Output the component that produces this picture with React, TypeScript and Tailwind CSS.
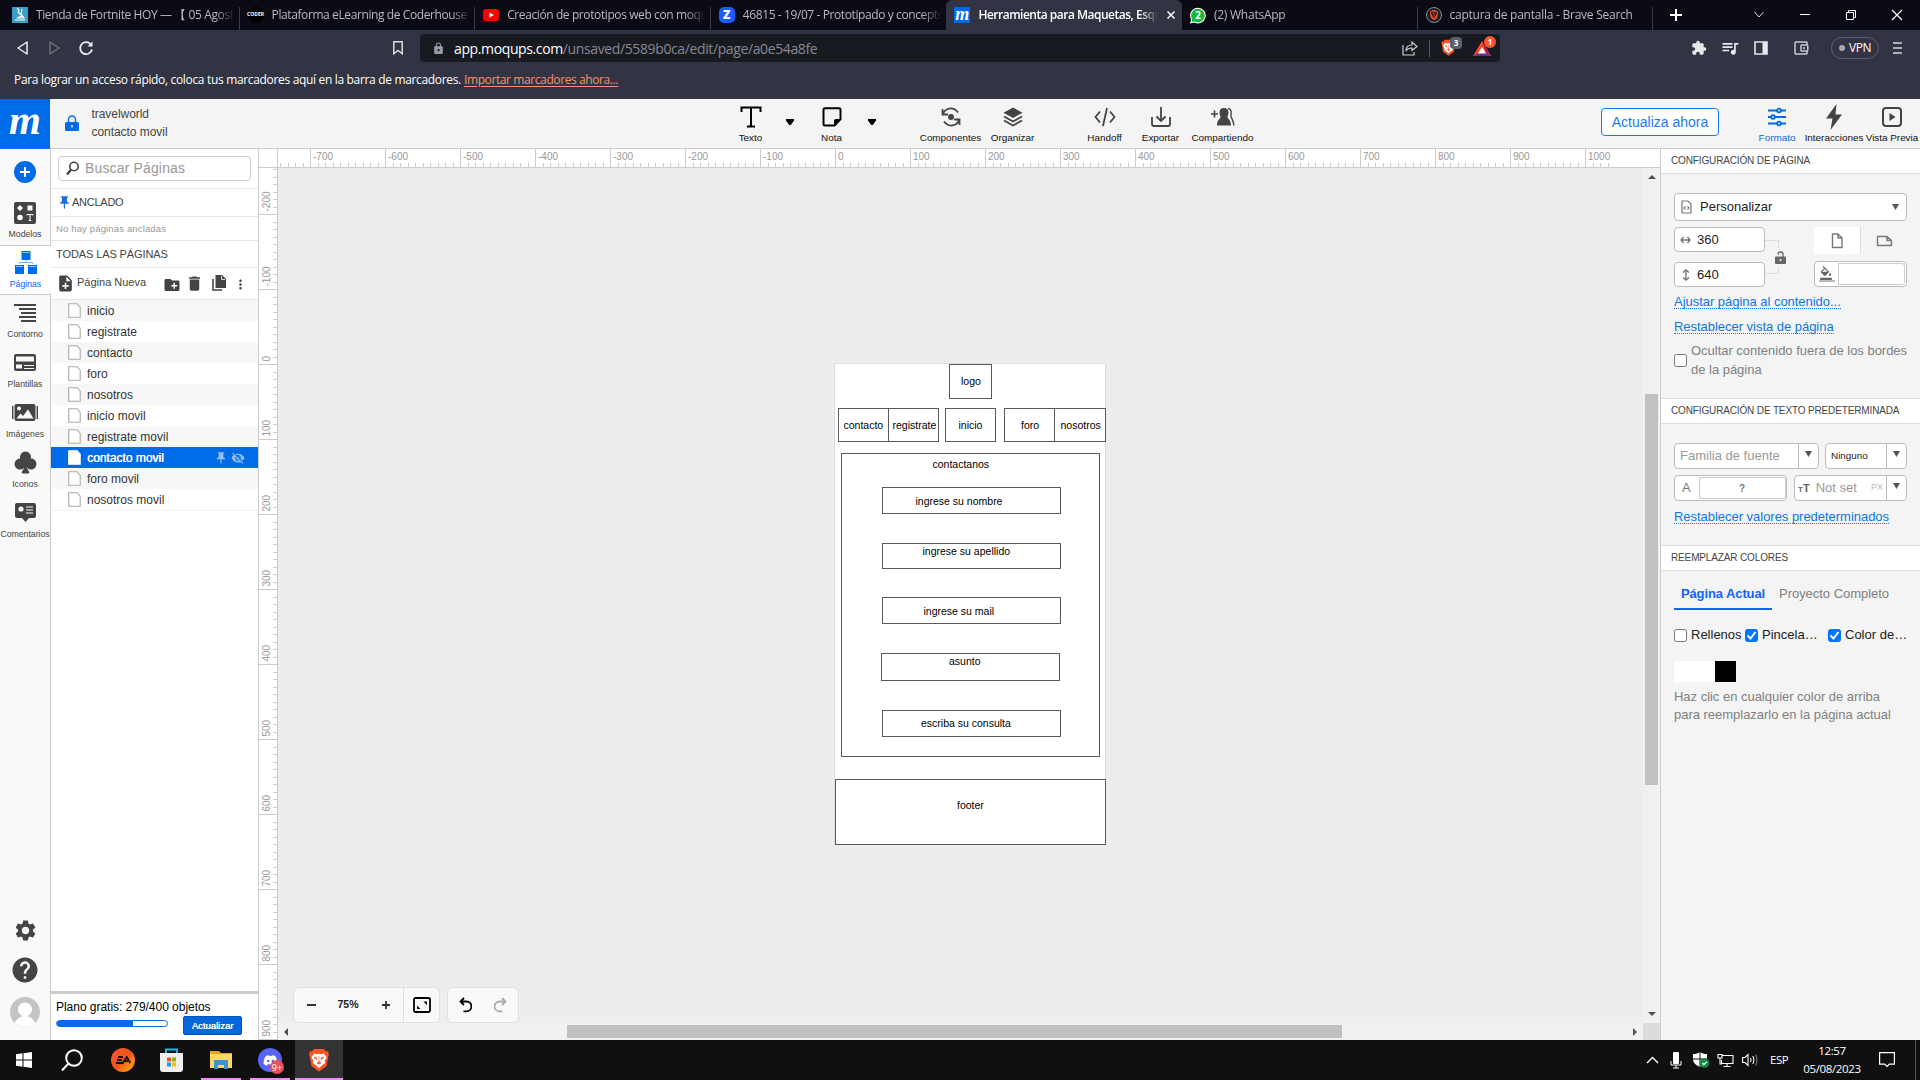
import React from "react";
import {
  MdExtension, MdQueueMusic, MdSettings, MdHelp, MdCreateNewFolder, MdDelete, MdMoreVert,
  MdNoteAdd, MdVisibilityOff, MdPushPin, MdLock, MdFormatColorFill, MdOutlineAccountBalanceWallet,
} from "react-icons/md";
import { FaDiscord } from "react-icons/fa";
import { SiBrave } from "react-icons/si";
import { BsSuitClubFill } from "react-icons/bs";

type Kids = { children?: React.ReactNode };

/* ---------- Browser chrome ---------- */

function Tab({ icon, title, active, line = true, last }: { icon: React.ReactNode; title: string; active?: boolean; line?: boolean; last?: boolean }) {
  return (
    <div className={`relative flex h-[30px] w-[235.600px] shrink-0 items-center pl-[8px] ${active ? "rounded-t-md bg-[#323443] font-semibold text-white" : "text-[#b9bac0]"}`}>
      <div className="flex h-4 w-4 shrink-0 items-center justify-center">{icon}</div>
      <div className={`ml-[8px] overflow-hidden whitespace-nowrap ${active ? "w-[180px] tracking-[-0.5px]" : last ? "w-[200px] tracking-[-0.25px]" : "w-[199px] tracking-[-0.4px]"} [mask-image:linear-gradient(to_right,black_90%,transparent)]`}>{title}</div>
      {active && (
        <svg className="ml-[8px]" width="10" height="10" viewBox="0 0 10 10" stroke="#fff" strokeWidth="1.5"><path d="M1.500 1.500l7 7M8.500 1.500l-7 7" /></svg>
      )}
      {line && !active && <div className="absolute right-0 top-[7px] h-[23px] w-px bg-[#3a3b45]" />}
    </div>
  );
}

function BraveIcon({ size }: { size: number }) {
  return (
    <svg width={size} height={size} viewBox="0 0 24 24">
      <path d="M7 1h10l2 2.4 2-.2 1 3.3-.8 2.5L19.6 18 12 23.6 4.400 18 2.800 9 2 6.500l1-3.300 2 .2z" fill="#fb5424" />
      <path d="M7 5.500l3 .8 2-.5 2 .5 3-.8 2.600 4-2 3.500.6 2-3 2.200L12 20l-3.200-2.800-3-2.200.6-2-2-3.500z" fill="#fff" />
      <path d="M7 9l3 .8-.5 2zM17 9l-3 .8.5 2zM12 8v5.500l-2 1.500 2 1.300 2-1.300-2-1.500" fill="#fb5424" stroke="#fb5424" strokeWidth=".6" />
    </svg>
  );
}

function TabStrip() {
  return (
    <div className="flex h-[30px] bg-[#0a0b14] pl-[4px] text-[12px]">
      <Tab title="Tienda de Fortnite HOY — 【 05 Agosto" icon={
        <svg width="16" height="16" viewBox="0 0 16 16"><rect width="16" height="16" fill="#3a9ec6" /><path d="M5 1l2 2-1 2 4 4-5 2h7l-3-4 1-5M3 13h10" fill="none" stroke="#fff" strokeWidth="1.2" /></svg>} />
      <Tab title="Plataforma eLearning de Coderhouse" icon={
        <div className="flex h-4 w-4 items-center justify-center rounded-full bg-black text-[5px] font-bold text-white">CODER</div>} />
      <Tab title="Creación de prototipos web con moqups" icon={
        <svg width="16" height="16" viewBox="0 0 16 16"><rect y="2" width="16" height="12" rx="3" fill="#f00" /><path d="M6.500 5.500v5L11 8z" fill="#fff" /></svg>} />
      <Tab line={false} title="46815 - 19/07 - Prototipado y conceptos" icon={
        <div className="flex h-4 w-4 items-center justify-center rounded-[5px] bg-[#1a5cff] text-[12px] font-extrabold text-white">Z</div>} />
      <Tab active title="Herramienta para Maquetas, Esquemas" icon={
        <div className="flex h-4 w-4 items-center justify-center bg-[#006be6] pb-[3px] font-['Liberation_Serif',serif] text-[18px] font-bold italic leading-none text-white">m</div>} />
      <Tab title="(2) WhatsApp" last icon={
        <svg width="17" height="17" viewBox="0 0 17 17"><path d="M8.500.7a7.800 7.800 0 1 1-3.800 14.700L.8 16.300l1-3.800A7.800 7.800 0 0 1 8.500.7z" fill="#12b93c" stroke="#fff" strokeWidth="1.100" /><text x="8.600" y="12.200" textAnchor="middle" fontSize="10.500" fontWeight="700" fill="#fff">2</text></svg>} />
      <Tab title="captura de pantalla - Brave Search" last icon={
        <div className="flex h-4 w-4 items-center justify-center rounded-full border border-[#8d8e96] bg-[#1b1c25]"><SiBrave size={10} color="#fb5424" /></div>} />
      <div className="flex w-[30px] items-center justify-end">
        <svg className="shrink-0" width="14" height="14" viewBox="0 0 14 14" stroke="#fff" strokeWidth="2"><path d="M7 1v12M1 7h12" /></svg>
      </div>
      <div className="ml-auto flex items-center gap-[34px] pr-[17px]">
        <svg width="12" height="12" viewBox="0 0 12 12" fill="none" stroke="#ddd"><path d="M1.500 3l4.500 5 4.500-5" /></svg>
        <svg width="12" height="12" viewBox="0 0 12 12" stroke="#fff"><path d="M1 5.500h10" /></svg>
        <svg width="12" height="12" viewBox="0 0 12 12" fill="none" stroke="#fff"><path d="M1.500 3.500h7v7h-7zM3.500 3.500v-2h7v7h-2" /></svg>
        <svg width="12" height="12" viewBox="0 0 12 12" stroke="#fff" strokeWidth="1.200"><path d="M1 1l10 10M11 1L1 11" /></svg>
      </div>
    </div>
  );
}

function AddressRow() {
  return (
    <div className="flex h-[36px] items-center">
      <svg className="ml-[16px]" width="13" height="16" viewBox="0 0 13 16" fill="none" stroke="#eee" strokeWidth="1.500"><path d="M11 2v12L2 8z" strokeLinejoin="round" /></svg>
      <svg className="ml-[19px]" width="13" height="16" viewBox="0 0 13 16" fill="none" stroke="#6d6f7c" strokeWidth="1.500"><path d="M2 2v12l9-6z" strokeLinejoin="round" /></svg>
      <svg className="ml-[17px]" width="16" height="16" viewBox="0 0 16 16" fill="none" stroke="#eee" strokeWidth="1.800"><path d="M14 9.500A6 6 0 1 1 12.500 4" /><path d="M14.500 1.500v5h-5z" fill="#eee" stroke="none" /></svg>
      <svg className="ml-[298px]" width="12" height="16" viewBox="0 0 12 16" fill="none" stroke="#ddd" strokeWidth="1.500"><path d="M1.800 1.800h8.400v12L6 10.500l-4.200 3.300z" /></svg>
      <div className="ml-[16px] flex h-[28px] w-[1080px] items-center rounded-[4px] bg-[#181a21] text-[14px]">
        <MdLock className="ml-[12px] text-[#9b9ca5]" size={13} />
        <div className="ml-[9px] grow whitespace-nowrap tracking-[-0.38px] text-[#868891]"><span className="text-white">app.moqups.com</span>/unsaved/5589b0ca/edit/page/a0e54a8fe</div>
        <svg width="16" height="16" viewBox="0 0 16 16" fill="none" stroke="#ccc" strokeWidth="1.200"><path d="M1 5v10h11v-3M4 11c0-4 2-6 6-6V2l5 4.500-5 4V8C7 8 5 9 4 11z" /></svg>
        <div className="ml-[11px] mr-[10px] h-[17px] w-px bg-[#555762]" />
        <div className="relative h-[18px] w-[24px]">
          <BraveIcon size={17} />
          <div className="absolute -top-[2px] left-[10px] flex h-[12px] w-[12px] items-center justify-center rounded-[4px] bg-[#5d5f6d] text-[8px] font-bold text-white">3</div>
        </div>
        <div className="relative ml-[9px] mr-[4px] h-[18px] w-[23px]">
          <svg width="18" height="18" viewBox="0 0 18 18"><path d="M9 2L0 17h18z" fill="#ff4724" /><path d="M0 17h18l-9-5z" fill="#662d91" /><path d="M9 2l9 15-5-3z" fill="#9e1f63" /><path d="M9 8l4 6.500H5z" fill="#fff" /></svg>
          <div className="absolute -top-[3px] left-[11px] flex h-[12px] w-[12px] items-center justify-center rounded-full bg-[#fb542b] text-[8px] font-bold text-white">1</div>
        </div>
      </div>
      <div className="ml-auto flex items-center pr-[17px] text-[#e8e8ea]">
        <MdExtension size={16} />
        <MdQueueMusic size={20} className="ml-[13px]" />
        <svg className="ml-[14px]" width="14" height="14" viewBox="0 0 14 14"><path d="M1 1h12v12H1z" fill="none" stroke="#e8e8ea" strokeWidth="1.600" /><path d="M8.500 1H13v12H8.500z" fill="#e8e8ea" /></svg>
        <MdOutlineAccountBalanceWallet size={18} className="ml-[24px] text-[#c8c9ce]" />
        <div className="ml-[21px] flex h-[22px] w-[48px] items-center justify-center rounded-full border border-[#5d5f6d] text-[12px] tracking-[-0.4px] text-white"><span className="mr-[4px] h-[6px] w-[6px] rounded-full bg-[#a8a9b2]" />VPN</div>
        <svg className="ml-[13px]" width="11" height="12" viewBox="0 0 11 12" stroke="#d8d8dc" strokeWidth="1.400"><path d="M1 1h9M1 6h9M1 11h9" /></svg>
      </div>
    </div>
  );
}

/* ---------- App header ---------- */

function Tool({ label, w, children, blue, dark }: Kids & { label: string; w: string; blue?: boolean; dark?: boolean }) {
  return (
    <div className={`flex shrink-0 flex-col items-center ${w} ${blue ? "text-[#006be6]" : dark ? "text-black" : "text-[#444]"}`}>
      <div className="flex h-[24px] items-center justify-center">{children}</div>
      <div className={`mt-[3px] whitespace-nowrap text-[9.900px] leading-[12px] ${blue ? "" : "text-[#111]"}`}>{label}</div>
    </div>
  );
}

const Caret = () => (
  <svg className="shrink-0" width="8" height="6" viewBox="0 0 8 6"><path d="M0 0h8v1.500L4.800 6H3.200L0 1.500z" fill="#000" /></svg>
);

function Header() {
  return (
    <div className="flex h-[50px] shrink-0 border-b border-[#ccc] bg-[#f4f4f4]">
      <div className="flex h-[50px] w-[50px] shrink-0 items-center justify-center bg-[#006be6] pb-[7px] font-['Liberation_Serif',serif] text-[41px] font-bold italic leading-none text-white">m</div>
      <svg className="ml-[15px] mt-[16px] shrink-0" width="14" height="17" viewBox="0 0 14 17"><path d="M3.500 8V4.500a3.500 3.500 0 0 1 7 0V8" fill="none" stroke="#006be6" strokeWidth="1.500" /><rect y="7" width="14" height="9" rx="1.500" fill="#006be6" /><path d="M7 10v2.500" stroke="#fff" strokeWidth="1.400" /></svg>
      <div className="ml-[12.500px] w-[200px] shrink-0 pt-[6px] text-[12px] leading-[18px] tracking-[-0.05px] text-[#444]">travelworld<br />contacto movil</div>
      <div className="flex shrink-0 pt-[6px]">
        <Tool w="ml-[435px] w-[48px]" label="Texto" dark>
          <svg width="22" height="22" viewBox="0 0 22 22" fill="none" stroke="#000" strokeWidth="2"><path d="M1.500 6V1.500h19V6M11 1.500v19M7 20.500h8" /></svg>
        </Tool>
        <div className="ml-[11px] mt-[14px]"><Caret /></div>
        <Tool w="ml-[14px] w-[48px]" label="Nota" dark>
          <svg width="20" height="20" viewBox="0 0 20 20"><path d="M3 1.200h14q1.500 0 1.500 1.500V12l-6 6.500H3q-1.500 0-1.500-1.500V2.700Q1.500 1.200 3 1.200z" fill="none" stroke="#000" strokeWidth="2" /><path d="M18.500 12v1l-5.500 6h-1v-5q0-2 2-2z" /></svg>
        </Tool>
        <div className="ml-[12px] mt-[14px]"><Caret /></div>
        <Tool w="ml-[37px] w-[76px]" label="Componentes">
          <svg width="20" height="20" viewBox="0 0 20 20" fill="none" stroke="#444" strokeWidth="1.800"><circle cx="10" cy="10" r="3" fill="#444" stroke="none" /><path d="M2 7C4 1 12-1 17 5.500M1.500 2v5.500H7M18 13c-2 6-10 8-15 1.500M18.500 18v-5.500H13" /></svg>
        </Tool>
        <Tool w="w-[48px]" label="Organizar">
          <svg width="20" height="20" viewBox="0 0 20 20"><path d="M10 .5l9.500 5.300L10 11 .5 5.800z" fill="#444" /><path d="M1 9.500l9 5 9-5M1 13.500l9 5 9-5" fill="none" stroke="#444" strokeWidth="1.800" /></svg>
        </Tool>
        <Tool w="ml-[44px] w-[48px]" label="Handoff">
          <svg width="22" height="20" viewBox="0 0 22 20" fill="none" stroke="#444" strokeWidth="1.800"><path d="M6 4.500L1.500 10 6 15.500M16 4.500l4.500 5.500-4.500 5.500M13 1L9 19" /></svg>
        </Tool>
        <Tool w="ml-[7px] w-[50px]" label="Exportar">
          <svg width="20" height="20" viewBox="0 0 20 20" fill="none" stroke="#444" strokeWidth="1.800"><path d="M1 10v7q0 2 2 2h14q2 0 2-2v-7M10 0v13.500M5.500 9.500L10 14l4.500-4.500" /></svg>
        </Tool>
        <Tool w="w-[74px]" label="Compartiendo">
          <svg width="24" height="20" viewBox="0 0 24 20"><path d="M0 7h7M3.500 3.500v7" stroke="#444" strokeWidth="1.600" /><path d="M13 1c3 0 4.500 2 4.500 4.500 0 2.500-1 3.500-1 4.500 0 2 3.500 2.500 3.500 8.500H6c0-6 3.500-6.500 3.500-8.500 0-1-1-2-1-4.500C8.500 3 10 1 13 1z" fill="#444" /><path d="M17 1.500c3 .5 3.500 3 3 5.500-1 4 2.500 5 3 11.500" fill="none" stroke="#444" strokeWidth="1.400" /></svg>
        </Tool>
      </div>
      <div className="ml-auto flex shrink-0">
        <div className="mt-[9px] flex h-[28px] w-[118px] items-center justify-center rounded-[4px] border border-[#1a7af0] bg-white text-[14px] text-[#1a7af0]">Actualiza ahora</div>
        <div className="flex pt-[6px]">
          <Tool w="ml-[34px] w-[48px]" label="Formato" blue>
            <svg width="18" height="20" viewBox="0 0 18 20" fill="#f4f4f4" stroke="#006be6" strokeWidth="1.800"><path d="M0 3.500h18M0 10h18M0 16.500h18" /><circle cx="11" cy="3.500" r="1.800" /><circle cx="5" cy="10" r="1.800" /><circle cx="11" cy="16.500" r="1.800" /></svg>
          </Tool>
          <Tool w="ml-[1px] w-[64px]" label="Interacciones">
            <svg width="18" height="26" viewBox="0 0 18 26"><path d="M11.500 0L1 14.500h6.500L5.500 26 17 10.500h-6.500z" fill="#444" /></svg>
          </Tool>
          <Tool w="-ml-[2px] w-[56px]" label="Vista Previa">
            <svg width="20" height="20" viewBox="0 0 20 20"><rect x="1" y="1" width="18" height="18" rx="3" fill="none" stroke="#444" strokeWidth="2" /><path d="M7.500 6v8l6-4z" fill="#444" /></svg>
          </Tool>
        </div>
      </div>
    </div>
  );
}

/* ---------- Left rail ---------- */

function RailItem({ label, children, active }: Kids & { label: string; active?: boolean }) {
  return (
    <div className={`flex h-[50px] flex-col items-center ${active ? "-mr-px border-y border-[#ccc] bg-white text-[#006be6]" : "text-[#444]"}`}>
      <div className={`flex items-center justify-center ${active ? "h-[33px]" : "h-[34px] pt-px"}`}>{children}</div>
      <div className="whitespace-nowrap text-[8.700px] leading-[10px]">{label}</div>
    </div>
  );
}

function Rail() {
  return (
    <div className="flex w-[51px] shrink-0 flex-col border-r border-[#ccc] bg-[#f9f9f9]">
      <div className="flex h-[46px] items-center justify-center pb-[1px]">
        <svg width="22" height="22" viewBox="0 0 22 22"><circle cx="11" cy="11" r="11" fill="#006be6" /><path d="M11 6v10M6 11h10" stroke="#fff" strokeWidth="2" /></svg>
      </div>
      <RailItem label="Modelos">
        <svg width="22" height="22" viewBox="0 0 22 22"><rect width="22" height="22" rx="2" fill="#444" /><path d="M6 3l3 3-3 3-3-3zM13.500 3.500h5v5h-5z" fill="#fff" /><circle cx="6" cy="15.500" r="2.800" fill="#fff" /><path d="M13 13.500v-1h6v1M16 12.500v6M14.800 18.500h2.500" stroke="#fff" fill="none" /></svg>
      </RailItem>
      <RailItem label="Páginas" active>
        <svg width="22" height="23" viewBox="0 0 22 23"><path d="M6.500 0h9v9h-9zM0 14h9v9H0zM13 14h9v9h-9z" fill="#006be6" /><path d="M7.500 1.500h7M1 15.500h7M14 15.500h7" stroke="#8fc0fa" /><path d="M4.500 13v-1.500h13V13M11 9v2.500" fill="none" stroke="#7bb2f5" /></svg>
      </RailItem>
      <RailItem label="Contorno">
        <svg width="22" height="18" viewBox="0 0 22 18" stroke="#444" strokeWidth="2"><path d="M0 1h22M5 5h17M7 9h15M5 13h17M7 17h15" /></svg>
      </RailItem>
      <RailItem label="Plantillas">
        <svg width="22" height="17" viewBox="0 0 22 17"><rect width="22" height="17" rx="2" fill="#444" /><path d="M2 2.500h18v5H2zM2 10.500h6v4H2z" fill="#f9f9f9" /><path d="M10 11.500h10M10 14.500h10" stroke="#f9f9f9" strokeWidth="1.200" /></svg>
      </RailItem>
      <RailItem label="Imágenes">
        <svg width="26" height="17" viewBox="0 0 26 17"><rect x="2.500" width="21" height="17" rx="2" fill="#444" /><path d="M.7 2v13M25.300 2v13" stroke="#444" strokeWidth="1.400" /><circle cx="7" cy="4.500" r="2" fill="#f9f9f9" /><path d="M4.500 14.500l4-5 2.500 2.500 5-6.500 5.500 9z" fill="#f9f9f9" /></svg>
      </RailItem>
      <RailItem label="Iconos"><BsSuitClubFill size={25} /></RailItem>
      <RailItem label="Comentarios">
        <svg width="21" height="19" viewBox="0 0 21 19"><path d="M2 0h17q2 0 2 2v11q0 2-2 2h-5l-3.500 4L7 15H2q-2 0-2-2V2q0-2 2-2z" fill="#444" /><circle cx="6" cy="6" r="2.600" fill="#f9f9f9" /><path d="M11 4h7M11 7h7M11 10h7" stroke="#f9f9f9" strokeWidth="1.200" /></svg>
      </RailItem>
      <div className="mt-auto flex flex-col items-center pb-[13px]">
        <MdSettings size={25} color="#444" />
        <MdHelp size={30} color="#444" className="mt-[12px]" />
        <svg className="mt-[12px]" width="30" height="30" viewBox="0 0 30 30"><defs><clipPath id="av"><circle cx="15" cy="15" r="15" /></clipPath></defs><g clipPath="url(#av)"><path d="M0 0h30v30H0z" fill="#c4c4c4" /><circle cx="15" cy="12.500" r="7" fill="#fff" /><path d="M3 31c2-9 7-12 12-12s10 3 12 12z" fill="#fff" /></g></svg>
      </div>
    </div>
  );
}

/* ---------- Pages panel ---------- */

const PAGES = ["inicio", "registrate", "contacto", "foro", "nosotros", "inicio movil", "registrate movil", "contacto movil", "foro movil", "nosotros movil"];

function PageRow({ name, i }: { name: string; i: number }) {
  const on = name === "contacto movil";
  return (
    <div className={`flex h-[21px] items-center pl-[17px] text-[12px] ${on ? "bg-[#006be6] text-white [text-shadow:0.4px_0_0_white]" : i % 2 ? "bg-white text-[#333]" : "bg-[#f7f7f7] text-[#333]"}`}>
      <svg width="13" height="15" viewBox="0 0 13 15"><path d="M.7.7h8.500l3 3.500v10H.7z" fill="#fff" stroke={on ? "#fff" : "#aaa"} strokeWidth="1.100" /></svg>
      <span className="ml-[6px]">{name}</span>
      {on && <MdPushPin size={14} className="ml-auto text-[#8fc0fa]" />}
      {on && <MdVisibilityOff size={14} className="ml-[3px] mr-[13px] text-[#8fc0fa]" />}
    </div>
  );
}

function PagesPanel() {
  return (
    <div className="flex w-[208px] shrink-0 flex-col border-r border-[#ccc] bg-white text-[#444]">
      <div className="h-[40px] border-b border-[#e6e6e6] pl-[7px] pt-[7px]">
        <div className="flex h-[25px] w-[193px] items-center rounded-[4px] border border-[#ccc] pl-[7px] text-[14px] tracking-[0.15px] text-[#999]">
          <svg className="mr-[5px]" width="14" height="15" viewBox="0 0 14 15" fill="none" stroke="#444" strokeWidth="1.600"><circle cx="8" cy="5.500" r="4.200" /><path d="M5 8.800L1 13.500" strokeWidth="2.400" /></svg>Buscar Páginas
        </div>
      </div>
      <div className="flex h-[28px] items-center border-b border-[#e6e6e6] pl-[6px] text-[11px] tracking-[-0.25px]"><MdPushPin size={15} color="#1a6ee0" />ANCLADO</div>
      <div className="flex h-[24px] items-center border-b border-[#e6e6e6] pl-[5px] pt-px text-[9.500px] tracking-[0.15px] text-[#999]">No hay páginas ancladas</div>
      <div className="flex h-[27px] items-center border-b border-[#e6e6e6] pl-[5px] text-[11px] tracking-[-0.1px]">TODAS LAS PÁGINAS</div>
      <div className="flex h-[32px] items-center border-b border-[#e6e6e6] pl-[5px] text-[11px]">
        <MdNoteAdd size={19} className="-mt-px" /><span className="-mt-[2px] ml-[2px]">Página Nueva</span>
        <MdCreateNewFolder size={18} className="ml-[17px] mt-[3px]" />
        <MdDelete size={19} className="-mt-px ml-[4px]" />
        <svg className="-mt-px ml-[8px]" width="14" height="16" viewBox="0 0 14 16"><path d="M1 4v11h9" fill="none" stroke="#444" strokeWidth="1.600" /><path d="M3.500 0H10l4 4v9H3.500z" fill="#444" /><path d="M9.500 1v3.500H13" fill="none" stroke="#fff" strokeWidth=".8" /></svg>
        <MdMoreVert size={15} className="ml-[7px] mt-[1px]" />
      </div>
      <div className="border-b border-[#f0f0f0]">{PAGES.map((p, i) => <PageRow key={p} name={p} i={i} />)}</div>
      <div className="mt-auto h-[49px] border-t-[3px] border-[#ccc] pl-[5px]">
        <div className="pt-[6px] text-[12px] leading-[14px] tracking-[-0.03px] text-black">Plano gratis: 279/400 objetos</div>
        <div className="flex">
          <div className="mt-[6px] h-[7px] w-[112px] overflow-hidden rounded-full border border-[#006be6]"><div className="h-full w-[69%] bg-[#006be6]" /></div>
          <div className="ml-[15px] mt-[2px] flex h-[19px] w-[59px] items-center justify-center rounded-[2px] border border-[#0053b8] bg-[#0567dc] pt-px text-[9.500px] text-white [text-shadow:0.3px_0_0_white]">Actualizar</div>
        </div>
      </div>
    </div>
  );
}

/* ---------- Canvas ---------- */

function HRuler() {
  const minor = Array.from({ length: 184 }, (_, i) => 835.5 - 278 - 75 * 8 + i * 7.5).filter((x) => x >= 0);
  const major = Array.from({ length: 19 }, (_, i) => i - 8);
  return (
    <svg className="block bg-white" width="1382" height="18" viewBox="0 0 1382 18">
      {minor.map((x) => <path key={x} d={`M${Math.floor(x) + 0.5} 14v4`} stroke="#ccc" />)}
      {major.map((k) => (
        <g key={k}>
          <path d={`M${557.5 + 75 * k} 0v18`} stroke="#ccc" />
          <text x={560 + 75 * k} y="10.500" fontSize="10" fill="#999">{k * 100}</text>
        </g>
      ))}
    </svg>
  );
}

function VRuler() {
  const minor = Array.from({ length: 120 }, (_, i) => 364.5 - 168 - 225 + i * 7.5).filter((y) => y >= 0);
  const major = Array.from({ length: 12 }, (_, i) => i - 2);
  return (
    <svg className="block bg-white" width="18" height="872" viewBox="0 0 18 872">
      {minor.map((y) => <path key={y} d={`M14 ${Math.floor(y) + 0.5}h4`} stroke="#ccc" />)}
      {major.map((k) => (
        <g key={k}>
          <path d={`M0 ${196.5 + 75 * k}h18`} stroke="#ccc" />
          <text transform={`translate(10.500 ${193.5 + 75 * k}) rotate(-90)`} fontSize="10" fill="#999">{k * 100}</text>
        </g>
      ))}
    </svg>
  );
}

/* Nodes of the wireframe; coordinates are relative to the artboard corner. */
const NODES: { x: number; y: number; w: number; h: number; t: string; tx: number; ty: number }[] = [
  { x: 114, y: 0, w: 43, h: 35, t: "logo", tx: 126, ty: 17 },
  { x: 3, y: 44, w: 51, h: 34, t: "contacto", tx: 8.500, ty: 61 },
  { x: 53, y: 44, w: 51, h: 34, t: "registrate", tx: 57.500, ty: 61 },
  { x: 110, y: 44, w: 51, h: 34, t: "inicio", tx: 123.500, ty: 61 },
  { x: 169, y: 44, w: 51, h: 34, t: "foro", tx: 186, ty: 61 },
  { x: 219, y: 44, w: 52, h: 34, t: "nosotros", tx: 225.500, ty: 61 },
  { x: 6, y: 89, w: 259, h: 304, t: "contactanos", tx: 97.500, ty: 100 },
  { x: 47, y: 123, w: 179, h: 27, t: "ingrese su nombre", tx: 80.500, ty: 137 },
  { x: 47, y: 179, w: 179, h: 26, t: "ingrese su apellido", tx: 87.500, ty: 187 },
  { x: 47, y: 233, w: 179, h: 27, t: "ingrese su mail", tx: 88.500, ty: 247 },
  { x: 46, y: 289, w: 179, h: 28, t: "asunto", tx: 114, ty: 297 },
  { x: 47, y: 346, w: 179, h: 27, t: "escriba su consulta", tx: 86, ty: 359 },
  { x: 0, y: 415, w: 271, h: 66, t: "footer", tx: 122, ty: 441 },
];

function Artboard() {
  return (
    <div className="absolute left-[556px] top-[195px] h-[482px] w-[272px] border border-[#ddd] bg-white text-[10.500px] text-black">
      {NODES.map((n) => (
        <React.Fragment key={n.t}>
          <div className="absolute border border-[#5a5a5a]" style={{ left: n.x, top: n.y, width: n.w, height: n.h }} />
          <div className="absolute whitespace-nowrap leading-[12px]" style={{ left: n.tx, top: n.ty - 6 }}>{n.t}</div>
        </React.Fragment>
      ))}
    </div>
  );
}

function CanvasArea() {
  return (
    <div className="flex w-[1401px] shrink-0 flex-col">
      <div className="flex h-[19px] border-b border-[#ccc]">
        <div className="w-[19px] shrink-0 border-r border-[#ccc] bg-white" />
        <HRuler />
      </div>
      <div className="flex h-[872px]">
        <div className="w-[19px] shrink-0 border-r border-[#ccc] bg-white"><VRuler /></div>
        <div className="flex w-[1382px] flex-col bg-[#ededed]">
          <div className="flex h-[855px]">
            <div className="relative w-[1365px] overflow-hidden">
              <Artboard />
              <div className="absolute bottom-0 left-[15px] flex h-[36px] w-[147px] items-center rounded-[6px] border border-[#e0e0e0] bg-[#f9f9f9] text-[11px] font-bold text-[#222]">
                <svg className="ml-[12px]" width="10" height="10" stroke="#333" strokeWidth="2"><path d="M1 5h9" /></svg>
                <span className="ml-[20px] w-[24px] text-center text-[10.500px]">75%</span>
                <svg className="ml-[21px]" width="10" height="10" stroke="#333" strokeWidth="1.800"><path d="M1 5h8M5 1v8" /></svg>
                <div className="ml-[12px] h-full w-px bg-[#e0e0e0]" />
                <svg className="ml-[9px]" width="18" height="16" viewBox="0 0 18 16" fill="none" stroke="#000" strokeWidth="1.800"><rect x="1" y="1" width="16" height="14" rx="1.500" /><path d="M10.500 4.500H14V8zM4 8.500V12h3.500z" fill="#000" stroke="none" /></svg>
              </div>
              <div className="absolute bottom-0 left-[169px] flex h-[36px] w-[72px] items-center gap-[22px] rounded-[6px] border border-[#e0e0e0] bg-[#f9f9f9] pl-[11px]">
                <svg width="13" height="16" viewBox="0 0 13 16" fill="none" stroke="#000" strokeWidth="1.800"><path d="M2 4.500h5.500a4.700 4.700 0 0 1 0 9.800H4.500M5 1L1.500 4.500 5 8" /></svg>
                <svg width="13" height="16" viewBox="0 0 13 16" fill="none" stroke="#aaa" strokeWidth="1.800"><path d="M11 4.500H5.500a4.700 4.700 0 0 0 0 9.800h3M8 1l3.500 3.500L8 8" /></svg>
              </div>
            </div>
            <div className="flex w-[17px] flex-col items-center bg-[#f1f1f1]">
              <svg className="mt-[7px]" width="8" height="4"><path d="M0 4l4-4 4 4z" fill="#505050" /></svg>
              <div className="mt-[215px] h-[391px] w-[13px] bg-[#c1c1c1]" />
              <svg className="mb-[7px] mt-auto" width="8" height="4"><path d="M0 0l4 4 4-4z" fill="#505050" /></svg>
            </div>
          </div>
          <div className="flex h-[17px] items-center bg-[#f1f1f1]">
            <svg className="ml-[6px]" width="4" height="8"><path d="M4 0L0 4l4 4z" fill="#505050" /></svg>
            <div className="ml-[279px] h-[13px] w-[775px] bg-[#c1c1c1]" />
            <svg className="ml-auto mr-[6px]" width="4" height="8"><path d="M0 0l4 4-4 4z" fill="#505050" /></svg>
            <div className="h-[17px] w-[17px] bg-[#dcdcdc]" />
          </div>
        </div>
      </div>
    </div>
  );
}

/* ---------- Format panel ---------- */

const Section = ({ children }: Kids) => (
  <div className="flex h-[25px] shrink-0 items-center border-b border-[#ddd] bg-white pb-px pl-[10px] text-[10px] tracking-[-0.14px] text-[#444]">{children}</div>
);
const Box = ({ children, c }: Kids & { c: string }) => (
  <div className={`flex items-center rounded-[4px] border border-[#bbb] bg-white ${c}`}>{children}</div>
);
const Link = ({ children, c }: Kids & { c: string }) => (
  <div className={`flex h-[15px] ${c}`}><span className="border-b border-dotted border-[#1a7af0] leading-[15px] text-[#0d74e7]">{children}</span></div>
);
const Down = () => (
  <svg className="shrink-0" width="7" height="6"><path d="M0 0h7L3.500 6z" fill="#555" /></svg>
);
const Check = ({ on }: { on?: boolean }) => (
  <div className={`flex h-[13px] w-[13px] shrink-0 items-center justify-center rounded-[2.500px] border ${on ? "border-[#0075ff] bg-[#0075ff]" : "border-[#767676] bg-white"}`}>
    {on && <svg width="11" height="11" viewBox="0 0 11 11" fill="none" stroke="#fff" strokeWidth="2"><path d="M1.500 5.500l3 3 5-6.500" /></svg>}
  </div>
);

function FormatPanel() {
  return (
    <div className="flex grow flex-col border-l border-[#ccc] bg-[#f4f4f4] text-[13px] text-[#222]">
      <Section>CONFIGURACIÓN DE PÁGINA</Section>
      <div className="h-[225px] shrink-0 border-b border-[#ddd] pl-[13px] pt-[19px]">
        <Box c="h-[28px] w-[233px] pl-[6px]">
          <svg width="11" height="14" viewBox="0 0 11 14" fill="none" stroke="#777" strokeWidth="1.200"><path d="M1 1h6l3 3v9H1zM4.500 6.500L3 8l1.500 1.500M6.500 6.500L8 8 6.500 9.500" /></svg>
          <span className="ml-[8px] grow">Personalizar</span><div className="mr-[7px]"><Down /></div>
        </Box>
        <div className="mt-[6px] flex">
          <div className="flex flex-col gap-[10px]">
            <Box c="h-[25px] w-[91px] pl-[5px]"><svg width="11" height="8" fill="none" stroke="#777" strokeWidth="1.400"><path d="M1 4h9M3.500 1L1 4l2.500 3M7.500 1L10 4 7.500 7" /></svg><span className="ml-[6px]">360</span></Box>
            <Box c="h-[25px] w-[91px] pl-[7px]"><svg width="8" height="12" fill="none" stroke="#777" strokeWidth="1.400"><path d="M4 1v10M1 3.500L4 1l3 2.500M1 8.500L4 11l3-2.500" /></svg><span className="ml-[7px]">640</span></Box>
          </div>
          <div className="flex w-[22px] flex-col">
            <div className="mt-[13px] h-[8px] w-[14px] border-r border-t border-[#ddd]" />
            <svg className="my-[3px] ml-[10px]" width="11" height="13" viewBox="0 0 11 13"><path d="M3 3.500a2.500 2.500 0 0 1 5 0V6" fill="none" stroke="#666" strokeWidth="1.300" /><rect y="5.500" width="11" height="7.500" rx="1" fill="#666" /><circle cx="5.500" cy="9" r="1.100" fill="#f4f4f4" /></svg>
            <div className="h-[7px] w-[14px] border-b border-r border-[#ddd]" />
          </div>
          <div className="ml-[27px] flex flex-col gap-[7px]">
            <div className="flex h-[27px] items-center">
              <div className="flex h-[27px] w-[47px] items-center justify-center border-r border-[#ddd] bg-white"><svg width="12" height="16" viewBox="0 0 12 16" fill="none" stroke="#777" strokeWidth="1.400"><path d="M1.500 1H7l4 4v9.500H1.500zM7 1v4h4" strokeLinejoin="round" /></svg></div>
              <svg className="ml-[15px]" width="17" height="12" viewBox="0 0 17 12" fill="none" stroke="#777" strokeWidth="1.400"><path d="M1.500 1.500H11l4.500 4v5h-14zM11 1.500v4h4.500" strokeLinejoin="round" /></svg>
            </div>
            <Box c="h-[26px] w-[93px] pl-[4px]">
              <div className="w-[16px] border-b-2 border-[#bbb]"><MdFormatColorFill size={14} color="#666" /></div>
              <div className="ml-[3px] h-[22px] w-[67px] rounded-r-[3px] border border-[#ccc]" />
            </Box>
          </div>
        </div>
        <Link c="mt-[7px] tracking-[-0.03px]">Ajustar página al contenido...</Link>
        <Link c="mt-[10px] tracking-[-0.03px]">Restablecer vista de página</Link>
        <div className="mt-[8px] flex items-center text-[#808080]"><Check /><div className="ml-[4px] whitespace-nowrap leading-[18.500px] tracking-[-0.02px]">Ocultar contenido fuera de los bordes<br />de la página</div></div>
      </div>
      <Section>CONFIGURACIÓN DE TEXTO PREDETERMINADA</Section>
      <div className="h-[122px] shrink-0 border-b border-[#ddd] pl-[13px] pt-[19px]">
        <div className="flex gap-[6px]">
          <Box c="h-[26px] w-[145px] pl-[5px] text-[#999]"><span className="grow">Familia de fuente</span><div className="flex h-full w-[20px] justify-center border-l border-[#bbb] pt-[7px]"><Down /></div></Box>
          <Box c="h-[26px] w-[82px] pl-[5px]"><span className="grow text-[9.900px]">Ninguno</span><div className="flex h-full w-[20px] justify-center border-l border-[#bbb] pt-[7px]"><Down /></div></Box>
        </div>
        <div className="mt-[6px] flex gap-[7px]">
          <Box c="h-[26px] w-[113px] pl-[7px] text-[#777]"><span>A</span><div className="ml-[8px] flex h-[22px] w-[87px] items-center justify-center rounded-r-[3px] border border-[#ccc] text-[10px] font-bold">?</div></Box>
          <Box c="h-[26px] w-[113px] pl-[3px] text-[#999]"><span className="flex items-baseline font-bold text-[#666]"><span className="text-[8px]">T</span><span className="text-[11px]">T</span></span><span className="ml-[6px] grow">Not set</span><span className="mr-[3px] text-[9px] text-[#bbb]">PX</span><div className="flex h-full w-[20px] justify-center border-l border-[#bbb] pt-[7px]"><Down /></div></Box>
        </div>
        <Link c="mt-[8px] tracking-[-0.03px]">Restablecer valores predeterminados</Link>
      </div>
      <Section>REEMPLAZAR COLORES</Section>
      <div className="pl-[13px] pt-[11px]">
        <div className="flex">
          <div className="flex h-[28px] w-[98px] justify-center border-b-2 border-[#1264f5] pt-[2px] font-bold tracking-[-0.1px] text-[#1264f5]">Página Actual</div>
          <div className="pl-[7px] pt-[2px] tracking-[-0.03px] text-[#808080]">Proyecto Completo</div>
        </div>
        <div className="mt-[18px] flex h-[14px] items-center whitespace-nowrap"><Check /><span className="ml-[4px] w-[54px]">Rellenos</span><Check on /><span className="ml-[4px] w-[66px]">Pincela…</span><Check on /><span className="ml-[4px]">Color de…</span></div>
        <div className="mt-[19px] flex h-[21px]"><div className="w-[41px] bg-white" /><div className="w-[21px] bg-black" /></div>
        <div className="mt-[6px] leading-[18px] tracking-[-0.02px] text-[#808080]">Haz clic en cualquier color de arriba<br />para reemplazarlo en la página actual</div>
      </div>
    </div>
  );
}

/* ---------- Taskbar ---------- */

function TaskApp({ children, w, u }: Kids & { w: string; u?: boolean }) {
  return <div className={`flex h-full shrink-0 items-center justify-center ${w} ${u ? "border-b-2 border-[#ee8ff5] pt-[2px]" : ""}`}>{children}</div>;
}

function Taskbar() {
  return (
    <div className="flex h-[40px] items-center bg-[#101010] font-['Open_Sans',sans-serif] text-white">
      <TaskApp w="w-[48px]"><svg width="16" height="16" viewBox="0 0 16 16" fill="#fff"><path d="M0 2.200L6.500 1.300v6.200H0zM7.500 1.200L16 0v7.500H7.500zM0 8.500h6.500v6.200L0 13.800zM7.500 8.500H16V16l-8.500-1.200z" /></svg></TaskApp>
      <TaskApp w="w-[48px]"><svg width="22" height="22" viewBox="0 0 22 22" fill="none" stroke="#fff" strokeWidth="2"><circle cx="13" cy="9" r="7.800" /><path d="M7.500 14.500L1 21.500" /></svg></TaskApp>
      <TaskApp w="w-[54px]"><div className="flex h-[24px] w-[24px] items-center justify-center rounded-full bg-gradient-to-br from-[#ff5a1f] via-[#f4511e] to-[#ffb300]"><svg width="16" height="8" viewBox="0 0 16 8" fill="none" stroke="#111" strokeWidth="1.800"><path d="M3 1h5M2 4h5M.8 7h7l4-6 3.500 6M10 5.200h3" /></svg></div></TaskApp>
      <TaskApp w="w-[43px]"><svg width="23" height="24" viewBox="0 0 23 24"><path d="M6 6V1.500h11V6" fill="none" stroke="#27b4e8" strokeWidth="2" /><path d="M0 5h23v16q0 3-3 3H3q-3 0-3-3z" fill="#eee" /><path d="M7 9.500h4v4H7z" fill="#f25022" /><path d="M12 9.500h4v4h-4z" fill="#7fba00" /><path d="M7 14.500h4v4H7z" fill="#00a4ef" /><path d="M12 14.500h4v4h-4z" fill="#ffb900" /></svg></TaskApp>
      <TaskApp w="ml-[8px] w-[40px]" u><svg width="22" height="20" viewBox="0 0 22 20"><path d="M0 1h9l2 2h11v15H0z" fill="#e8a317" /><path d="M0 4h22v14H0z" fill="#ffd766" /><path d="M4 19v-8q0-1 1-1h12q1 0 1 1v8h-4v-4H8v4z" fill="#3b93d8" /></svg></TaskApp>
      <TaskApp w="ml-[9px] w-[40px]" u>
        <div className="relative flex h-[24px] w-[24px] items-center justify-center rounded-full bg-[#5865f2]"><FaDiscord size={15} /><div className="absolute -bottom-[2px] -right-[2px] flex h-[14px] w-[14px] items-center justify-center rounded-full bg-[#ed4f56] text-[9px] leading-none">9+</div></div>
      </TaskApp>
      <div className="ml-[5px] flex h-full w-[48px] items-center justify-center border-b-2 border-[#ee8ff5] bg-[#333] pt-[2px]"><BraveIcon size={24} /></div>
      <div className="ml-auto flex h-full items-center">
        <svg width="13" height="8" fill="none" stroke="#fff" strokeWidth="1.400"><path d="M1 7l5.500-5.500L12 7" /></svg>
        <svg className="ml-[11px]" width="12" height="17" viewBox="0 0 12 17"><rect x="3" width="6" height="12" rx="1" fill="#fff" /><path d="M1 9v4h10V9M6 13v3M3 16h6" fill="none" stroke="#fff" /></svg>
        <svg className="ml-[11px]" width="17" height="16" viewBox="0 0 17 16"><path d="M7 0c2 1.500 4 2 7 2v5c0 4-3 6-7 8-4-2-7-4-7-8V2c3 0 5-.5 7-2z" fill="#fff" /><path d="M7 0v15M0 7h14" stroke="#101010" /><circle cx="11.500" cy="11" r="4.800" fill="#108a43" /><path d="M9.300 11l1.600 1.600 3-3" fill="none" stroke="#fff" strokeWidth="1.200" /></svg>
        <svg className="ml-[7px]" width="17" height="15" viewBox="0 0 17 15" fill="none" stroke="#fff" strokeWidth="1.100"><path d="M5 2.500h11v8H4.500V7M1 1.500h4V5H1zM3 5v6h2M10 10.500v3M6.500 13.500h7" /></svg>
        <svg className="ml-[8px]" width="17" height="14" viewBox="0 0 17 14" fill="none" stroke="#fff" strokeWidth="1.100"><path d="M.6 4.500h2.400L6 1.500v11L3 9.500H.6zM8.500 5q1 2 0 4M10.800 3q2 4 0 8" /><path d="M13.500 1.500q3 5.500 0 11" stroke="#777" /></svg>
        <div className="ml-[11px] w-[20px] text-[11.500px] tracking-[-0.5px]">ESP</div>
        <div className="ml-[9px] w-[66px] text-center text-[11.500px] leading-[18px] tracking-[-0.35px]">12:57<br />05/08/2023</div>
        <svg className="ml-[14px]" width="16" height="16" viewBox="0 0 16 16" fill="none" stroke="#fff" strokeWidth="1.200"><path d="M.6.6h14.800v11.500h-5L8 14.500l-2.400-2.400h-5z" /></svg>
        <div className="ml-[20px] mr-[4px] h-full w-px bg-[#555]" />
      </div>
    </div>
  );
}

export default function App() {
  return (
    <div className="flex h-[1080px] w-[1920px] flex-col overflow-hidden font-['Liberation_Sans',Arial,sans-serif]">
      <div className="h-[99px] shrink-0 bg-[#323443] font-['Open_Sans',sans-serif]">
        <TabStrip />
        <AddressRow />
        <div className="flex h-[28px] items-center pl-[14px] text-[12px] text-white">
          <span className="w-[450px] shrink-0 whitespace-nowrap tracking-[-0.33px]">Para lograr un acceso rápido, coloca tus marcadores aquí en la barra de marcadores.</span>
          <span className="whitespace-nowrap tracking-[-0.4px] text-[#ff8a75] underline underline-offset-2">Importar marcadores ahora...</span>
        </div>
      </div>
      <Header />
      <div className="flex h-[891px] shrink-0">
        <Rail />
        <PagesPanel />
        <CanvasArea />
        <FormatPanel />
      </div>
      <Taskbar />
    </div>
  );
}
